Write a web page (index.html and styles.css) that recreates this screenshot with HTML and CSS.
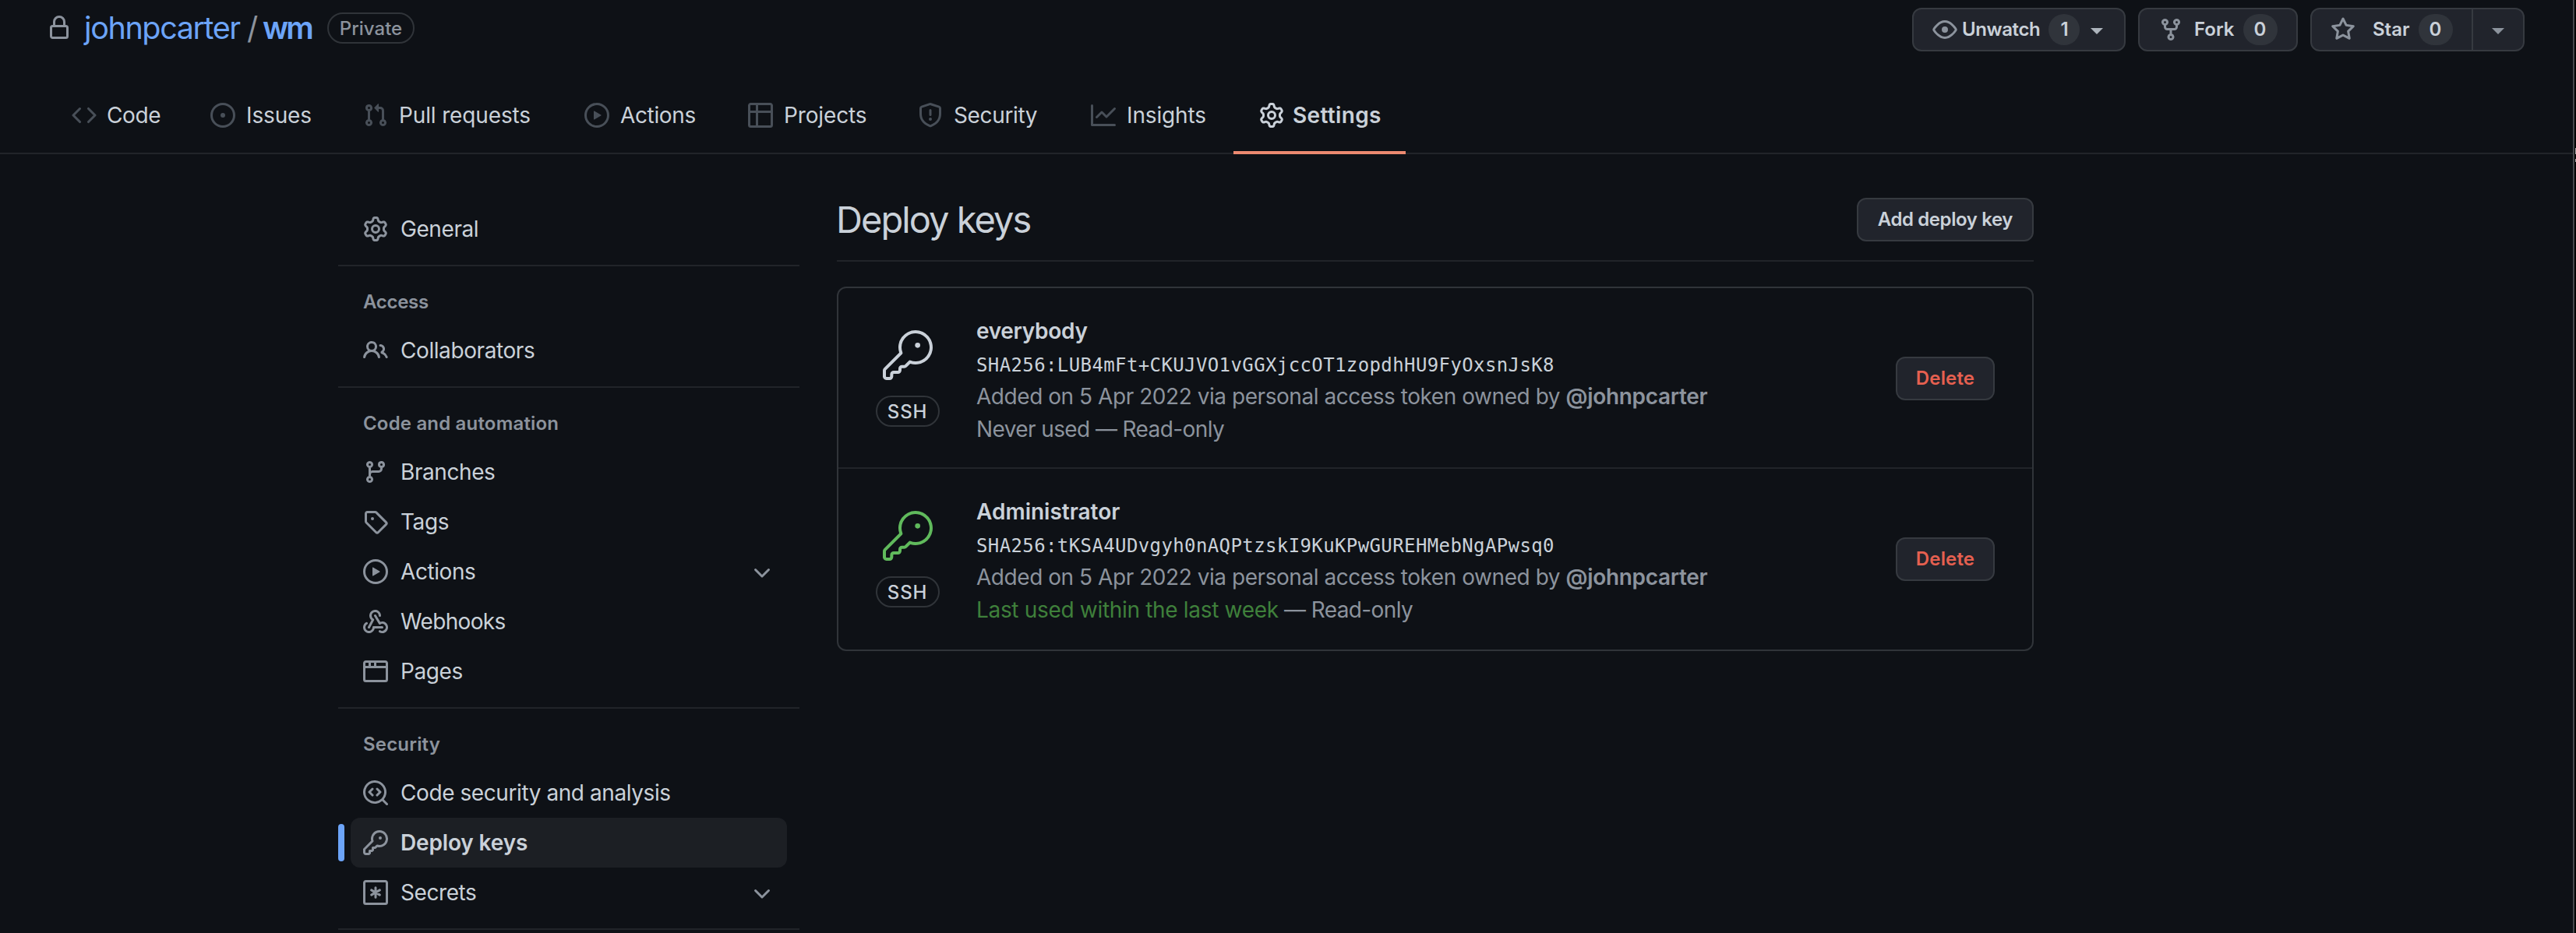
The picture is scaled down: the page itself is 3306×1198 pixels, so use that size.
FILE: index.html
```html
<!DOCTYPE html>
<html lang="en">
<head>
<meta charset="utf-8">
<title>Deploy keys · johnpcarter/wm</title>
<link rel="stylesheet" href="styles.css">
</head>
<body>
<svg class="sprite" aria-hidden="true">
<symbol id="lock" viewBox="0 0 16 16"><path fill-rule="evenodd" d="M4 4v2h-.25A1.75 1.75 0 002 7.75v5.5c0 .966.784 1.75 1.75 1.75h8.5A1.75 1.75 0 0014 13.25v-5.5A1.75 1.75 0 0012.25 6H12V4a4 4 0 10-8 0zm6.5 2V4a2.5 2.5 0 10-5 0v2h5zM12 7.5h.25a.25.25 0 01.25.25v5.5a.25.25 0 01-.25.25h-8.5a.25.25 0 01-.25-.25v-5.5a.25.25 0 01.25-.25H12z"/></symbol>
<symbol id="code" viewBox="0 0 16 16"><path fill-rule="evenodd" d="M4.72 3.22a.75.75 0 011.06 1.06L2.06 8l3.72 3.72a.75.75 0 11-1.06 1.06L.47 8.53a.75.75 0 010-1.06l4.25-4.25zm6.56 0a.75.75 0 10-1.06 1.06L13.94 8l-3.72 3.72a.75.75 0 101.06 1.06l4.25-4.25a.75.75 0 000-1.06l-4.25-4.25z"/></symbol>
<symbol id="issue" viewBox="0 0 16 16"><path d="M8 9.5a1.5 1.5 0 100-3 1.5 1.5 0 000 3z"/><path fill-rule="evenodd" d="M8 0a8 8 0 100 16A8 8 0 008 0zM1.5 8a6.5 6.5 0 1113 0 6.5 6.5 0 01-13 0z"/></symbol>
<symbol id="pr" viewBox="0 0 16 16"><path fill-rule="evenodd" d="M7.177 3.073L9.573.677A.25.25 0 0110 .854v4.792a.25.25 0 01-.427.177L7.177 3.427a.25.25 0 010-.354zM3.75 2.5a.75.75 0 100 1.5.75.75 0 000-1.5zm-2.25.75a2.25 2.25 0 113 2.122v5.256a2.251 2.251 0 11-1.5 0V5.372A2.25 2.25 0 011.5 3.25zM11 2.5h-1V4h1a1 1 0 011 1v5.628a2.251 2.251 0 101.5 0V5A2.5 2.5 0 0011 2.5zm1 10.25a.75.75 0 111.5 0 .75.75 0 01-1.5 0zM3.75 12a.75.75 0 100 1.5.75.75 0 000-1.5z"/></symbol>
<symbol id="play" viewBox="0 0 16 16"><path fill-rule="evenodd" d="M1.5 8a6.5 6.5 0 1113 0 6.5 6.5 0 01-13 0zM8 0a8 8 0 100 16A8 8 0 008 0zM6.379 5.227A.25.25 0 006 5.442v5.117a.25.25 0 00.379.214l4.264-2.559a.25.25 0 000-.428L6.379 5.227z"/></symbol>
<symbol id="table" viewBox="0 0 16 16"><path fill-rule="evenodd" d="M0 1.75C0 .784.784 0 1.75 0h12.5C15.216 0 16 .784 16 1.75v3.585a.746.746 0 010 .83v8.085A1.75 1.75 0 0114.25 16H6.309a.748.748 0 01-1.118 0H1.75A1.75 1.75 0 010 14.25V6.165a.746.746 0 010-.83V1.75zM1.5 6.5v7.75c0 .138.112.25.25.25H5v-8H1.5zM5 5H1.5V1.75a.25.25 0 01.25-.25H5V5zm1.5 1.5v8h7.75a.25.25 0 00.25-.25V6.5h-8zm8-1.5h-8V1.5h7.75a.25.25 0 01.25.25V5z"/></symbol>
<symbol id="shield" viewBox="0 0 16 16"><path fill-rule="evenodd" d="M7.467.133a1.75 1.75 0 011.066 0l5.25 1.68A1.75 1.75 0 0115 3.48V7c0 1.566-.32 3.182-1.303 4.682-.983 1.498-2.585 2.813-5.032 3.855a1.7 1.7 0 01-1.33 0c-2.447-1.042-4.049-2.357-5.032-3.855C1.32 10.182 1 8.566 1 7V3.48a1.75 1.75 0 011.217-1.667l5.25-1.68zm.61 1.429a.25.25 0 00-.153 0l-5.25 1.68a.25.25 0 00-.174.238V7c0 1.358.275 2.666 1.057 3.86.784 1.194 2.121 2.34 4.366 3.297a.2.2 0 00.154 0c2.245-.956 3.582-2.104 4.366-3.298C13.225 9.666 13.5 8.36 13.5 7V3.48a.25.25 0 00-.174-.237l-5.25-1.68zM9 10.5a1 1 0 11-2 0 1 1 0 012 0zm-.25-5.75a.75.75 0 10-1.5 0v3a.75.75 0 001.5 0v-3z"/></symbol>
<symbol id="graph" viewBox="0 0 16 16"><path fill-rule="evenodd" d="M1.5 1.75a.75.75 0 00-1.5 0v12.5c0 .414.336.75.75.75h14.5a.75.75 0 000-1.5H1.5V1.75zm14.28 2.53a.75.75 0 00-1.06-1.06L10 7.94 7.53 5.47a.75.75 0 00-1.06 0L3.22 8.72a.75.75 0 001.06 1.06L7 7.06l2.47 2.47a.75.75 0 001.06 0l5.25-5.25z"/></symbol>
<symbol id="gear" viewBox="0 0 16 16"><path fill-rule="evenodd" d="M7.429 1.525a6.593 6.593 0 011.142 0c.036.003.108.036.137.146l.289 1.105c.147.56.55.967.997 1.189.174.086.341.183.501.29.417.278.97.423 1.53.27l1.102-.303c.11-.03.175.016.195.046.219.31.41.641.573.989.014.031.022.11-.059.19l-.815.806c-.411.406-.562.957-.53 1.456a4.588 4.588 0 010 .582c-.032.499.119 1.05.53 1.456l.815.806c.08.08.073.159.059.19a6.494 6.494 0 01-.573.99c-.02.029-.086.074-.195.045l-1.103-.303c-.559-.153-1.112-.008-1.529.27-.16.107-.327.204-.5.29-.449.222-.851.628-.998 1.189l-.289 1.105c-.029.11-.101.143-.137.146a6.613 6.613 0 01-1.142 0c-.036-.003-.108-.037-.137-.146l-.289-1.105c-.147-.56-.55-.967-.997-1.189a4.502 4.502 0 01-.501-.29c-.417-.278-.97-.423-1.53-.27l-1.102.303c-.11.03-.175-.016-.195-.046a6.492 6.492 0 01-.573-.989c-.014-.031-.022-.11.059-.19l.815-.806c.411-.406.562-.957.53-1.456a4.587 4.587 0 010-.582c.032-.499-.119-1.05-.53-1.456l-.815-.806c-.08-.08-.073-.159-.059-.19a6.44 6.44 0 01.573-.99c.02-.029.086-.075.195-.045l1.103.303c.559.153 1.112.008 1.529-.27.16-.107.327-.204.5-.29.449-.222.851-.628.998-1.189l.289-1.105c.029-.11.101-.143.137-.146zM8 0c-.236 0-.47.01-.701.03-.743.065-1.29.615-1.458 1.261l-.29 1.106c-.017.066-.078.158-.211.224a5.994 5.994 0 00-.668.386c-.123.082-.233.09-.3.071L3.27 2.776c-.644-.177-1.392.02-1.82.63a7.977 7.977 0 00-.704 1.217c-.315.675-.111 1.422.363 1.891l.815.806c.05.048.098.147.088.294a6.084 6.084 0 000 .772c.01.147-.038.246-.088.294l-.815.806c-.474.469-.678 1.216-.363 1.891.2.428.436.835.704 1.218.428.609 1.176.806 1.82.63l1.103-.303c.066-.019.176-.011.299.071.213.143.436.272.668.386.133.066.194.158.212.224l.289 1.106c.169.646.715 1.196 1.458 1.26a8.094 8.094 0 001.402 0c.743-.064 1.29-.614 1.458-1.26l.29-1.106c.017-.066.078-.158.211-.224a5.98 5.98 0 00.668-.386c.123-.082.233-.09.3-.071l1.102.302c.644.177 1.392-.02 1.82-.63.268-.382.505-.789.704-1.217.315-.675.111-1.422-.364-1.891l-.814-.806c-.05-.048-.098-.147-.088-.294a6.1 6.1 0 000-.772c-.01-.147.039-.246.088-.294l.814-.806c.475-.469.679-1.216.364-1.891a7.992 7.992 0 00-.704-1.218c-.428-.609-1.176-.806-1.82-.63l-1.103.303c-.066.019-.176.011-.299-.071a5.991 5.991 0 00-.668-.386c-.133-.066-.194-.158-.212-.224L10.16 1.29C9.99.645 9.444.095 8.701.031A8.094 8.094 0 008 0zm1.5 8a1.5 1.5 0 11-3 0 1.5 1.5 0 013 0zM11 8a3 3 0 11-6 0 3 3 0 016 0z"/></symbol>
<symbol id="people" viewBox="0 0 16 16"><path fill-rule="evenodd" d="M5.5 3.5a2 2 0 100 4 2 2 0 000-4zM2 5.5a3.5 3.5 0 115.898 2.549 5.507 5.507 0 013.034 4.084.75.75 0 11-1.482.235 4.001 4.001 0 00-7.9 0 .75.75 0 01-1.482-.236A5.507 5.507 0 013.102 8.05 3.49 3.49 0 012 5.5zM11 4a.75.75 0 100 1.5 1.5 1.5 0 01.666 2.844.75.75 0 00-.416.672v.352a.75.75 0 00.574.73c1.2.289 2.162 1.2 2.522 2.372a.75.75 0 101.434-.44 5.01 5.01 0 00-2.56-3.012A3 3 0 0011 4z"/></symbol>
<symbol id="branch" viewBox="0 0 16 16"><path fill-rule="evenodd" d="M11.75 2.5a.75.75 0 100 1.5.75.75 0 000-1.5zm-2.25.75a2.25 2.25 0 113 2.122V6A2.5 2.5 0 0110 8.5H6a1 1 0 00-1 1v1.128a2.251 2.251 0 11-1.5 0V5.372a2.25 2.25 0 111.5 0v1.836A2.492 2.492 0 016 7h4a1 1 0 001-1v-.628A2.25 2.25 0 019.5 3.25zM4.25 12a.75.75 0 100 1.5.75.75 0 000-1.5zM3.5 3.25a.75.75 0 111.5 0 .75.75 0 01-1.5 0z"/></symbol>
<symbol id="tag" viewBox="0 0 16 16"><path fill-rule="evenodd" d="M2.5 7.775V2.75a.25.25 0 01.25-.25h5.025a.25.25 0 01.177.073l6.25 6.25a.25.25 0 010 .354l-5.025 5.025a.25.25 0 01-.354 0l-6.25-6.25a.25.25 0 01-.073-.177zm-1.5 0V2.75C1 1.784 1.784 1 2.75 1h5.025c.464 0 .91.184 1.238.513l6.25 6.25a1.75 1.75 0 010 2.474l-5.026 5.026a1.75 1.75 0 01-2.474 0l-6.25-6.25A1.75 1.75 0 011 7.775zM6 5a1 1 0 100 2 1 1 0 000-2z"/></symbol>
<symbol id="webhook" viewBox="0 0 16 16"><path d="M5.5 4.25a2.25 2.25 0 014.5 0 .75.75 0 001.5 0 3.75 3.75 0 10-6.14 2.889l-2.272 4.258a.75.75 0 001.324.706L7 7.25a.75.75 0 00-.309-1.015A2.25 2.25 0 015.5 4.25z"/><path d="M7.364 3.607a.75.75 0 011.03.257l2.608 4.349a3.75 3.75 0 11-.628 6.785.75.75 0 01.752-1.299 2.25 2.25 0 10-.033-3.88.75.75 0 01-1.03-.256L7.107 4.636a.75.75 0 01.257-1.03z"/><path d="M2.9 8.776A.75.75 0 012.625 9.8 2.25 2.25 0 106 11.75a.75.75 0 01.75-.751h5.5a.75.75 0 010 1.5H7.425a3.751 3.751 0 11-5.55-3.998.75.75 0 011.024.274z"/></symbol>
<symbol id="browser" viewBox="0 0 16 16"><path fill-rule="evenodd" d="M0 2.75C0 1.784.784 1 1.75 1h12.5c.966 0 1.75.784 1.75 1.75v10.5A1.75 1.75 0 0114.25 15H1.75A1.75 1.75 0 010 13.25V2.75zm1.75-.25a.25.25 0 00-.25.25V4.5h2v-2H1.75zM5 2.5v2h2v-2H5zm3.5 0v2h6V2.75a.25.25 0 00-.25-.25H8.5zm6 3.5h-13v7.25c0 .138.112.25.25.25h12.5a.25.25 0 00.25-.25V6z"/></symbol>
<symbol id="codescan" viewBox="0 0 16 16"><path d="M8.47 4.97a.75.75 0 000 1.06L9.94 7.5 8.47 8.97a.75.75 0 101.06 1.06l2-2a.75.75 0 000-1.06l-2-2a.75.75 0 00-1.06 0zM6.53 6.03a.75.75 0 00-1.06-1.06l-2 2a.75.75 0 000 1.06l2 2a.75.75 0 101.06-1.06L5.06 7.5l1.47-1.47z"/><path fill-rule="evenodd" d="M12.246 13.307a7.5 7.5 0 111.06-1.06l2.474 2.473a.75.75 0 11-1.06 1.06l-2.474-2.473zM1.5 7.5a6 6 0 1110.386 4.094.75.75 0 00-.292.293A6 6 0 011.5 7.5z"/></symbol>
<symbol id="key" viewBox="0 0 16 16"><path fill-rule="evenodd" d="M6.5 5.5a4 4 0 112.731 3.795.75.75 0 00-.768.18L7.44 10.5H6.25a.75.75 0 00-.75.75v1.19l-.06.06H4.25a.75.75 0 00-.75.75v1.19l-.06.06H1.75a.25.25 0 01-.25-.25v-1.69l5.024-5.023a.75.75 0 00.181-.768A3.995 3.995 0 016.5 5.5zm4-5.5a5.5 5.5 0 00-5.348 6.788L.22 11.72a.75.75 0 00-.22.53v2C0 15.216.784 16 1.75 16h2a.75.75 0 00.53-.22l.5-.5a.75.75 0 00.22-.53V14h.75a.75.75 0 00.53-.22l.5-.5a.75.75 0 00.22-.53V12h.75a.75.75 0 00.53-.22l.932-.932A5.5 5.5 0 1010.5 0zm.5 6a1 1 0 100-2 1 1 0 000 2z"/></symbol>
<symbol id="key-large" viewBox="0 0 24 24"><path d="M16.75 8.5a1.25 1.25 0 100-2.5 1.25 1.25 0 000 2.5z"/><path fill-rule="evenodd" d="M15.75 0a8.25 8.25 0 00-7.851 10.79L.513 18.178A1.75 1.75 0 000 19.414v2.836C0 23.217.784 24 1.75 24h1.5A1.75 1.75 0 005 22.25v-1a.25.25 0 01.25-.25h2A1.75 1.75 0 009 19.25V18.5a.25.25 0 01.25-.25h1.086c.464 0 .91-.184 1.237-.513l1.636-1.636A8.25 8.25 0 1015.75 0zM9 8.25a6.75 6.75 0 114.288 6.287.75.75 0 00-.804.168l-1.971 1.972a.25.25 0 01-.177.073H9.25A1.75 1.75 0 007.5 18.5v.75a.25.25 0 01-.25.25h-2a1.75 1.75 0 00-1.75 1.75v1a.25.25 0 01-.25.25h-1.5a.25.25 0 01-.25-.25v-2.836a.25.25 0 01.073-.177l7.722-7.721a.75.75 0 00.168-.804A6.73 6.73 0 019 8.25z"/></symbol>
<symbol id="secret" viewBox="0 0 16 16"><path fill-rule="evenodd" d="M1.75 0h12.5C15.216 0 16 .784 16 1.75v12.5A1.75 1.75 0 0114.25 16H1.75A1.75 1.75 0 010 14.25V1.75C0 .784.784 0 1.75 0zm0 1.5a.25.25 0 00-.25.25v12.5c0 .138.112.25.25.25h12.5a.25.25 0 00.25-.25V1.75a.25.25 0 00-.25-.25H1.75z"/><path d="M8 4.9v6.2M5.3 6.45l5.4 3.1M5.3 9.55l5.4-3.1" fill="none" stroke="currentColor" stroke-width="1.5" stroke-linecap="round"/></symbol>
<symbol id="eye" viewBox="0 0 16 16"><path fill-rule="evenodd" d="M1.679 7.932c.412-.621 1.242-1.75 2.366-2.717C5.175 4.242 6.527 3.5 8 3.5c1.473 0 2.824.742 3.955 1.715 1.124.967 1.954 2.096 2.366 2.717a.119.119 0 010 .136c-.412.621-1.242 1.75-2.366 2.717C10.825 11.758 9.473 12.5 8 12.5c-1.473 0-2.824-.742-3.955-1.715C2.92 9.818 2.09 8.69 1.679 8.068a.119.119 0 010-.136zM8 2c-1.981 0-3.67.992-4.933 2.078C1.797 5.169.88 6.423.43 7.1a1.619 1.619 0 000 1.798c.45.678 1.367 1.932 2.637 3.024C4.329 13.008 6.019 14 8 14c1.981 0 3.67-.992 4.933-2.078 1.27-1.091 2.187-2.345 2.637-3.023a1.619 1.619 0 000-1.798c-.45-.678-1.367-1.932-2.637-3.023C11.671 2.992 9.981 2 8 2zm0 8a2 2 0 100-4 2 2 0 000 4z"/></symbol>
<symbol id="fork" viewBox="0 0 16 16"><path fill-rule="evenodd" d="M5 3.25a.75.75 0 11-1.5 0 .75.75 0 011.5 0zm0 2.122a2.25 2.25 0 10-1.5 0v.878A2.25 2.25 0 005.75 8.5h1.5v2.128a2.251 2.251 0 101.5 0V8.5h1.5a2.25 2.25 0 002.25-2.25v-.878a2.25 2.25 0 10-1.5 0v.878a.75.75 0 01-.75.75h-4.5A.75.75 0 015 6.25v-.878zm3.75 7.378a.75.75 0 11-1.5 0 .75.75 0 011.5 0zm3-8.75a.75.75 0 100-1.5.75.75 0 000 1.5z"/></symbol>
<symbol id="star" viewBox="0 0 16 16"><path fill-rule="evenodd" d="M8 .25a.75.75 0 01.673.418l1.882 3.815 4.21.612a.75.75 0 01.416 1.279l-3.046 2.97.719 4.192a.75.75 0 01-1.088.791L8 12.347l-3.766 1.98a.75.75 0 01-1.088-.79l.72-4.194L.818 6.374a.75.75 0 01.416-1.28l4.21-.611L7.327.668A.75.75 0 018 .25zm0 2.445L6.615 5.5a.75.75 0 01-.564.41l-3.097.45 2.24 2.184a.75.75 0 01.216.664l-.528 3.084 2.769-1.456a.75.75 0 01.698 0l2.77 1.456-.53-3.084a.75.75 0 01.216-.664l2.24-2.183-3.096-.45a.75.75 0 01-.564-.41L8 2.694v.001z"/></symbol>
<symbol id="chevron" viewBox="0 0 16 16"><path fill-rule="evenodd" d="M12.78 6.22a.75.75 0 010 1.06l-4.25 4.25a.75.75 0 01-1.06 0L3.22 7.28a.75.75 0 011.06-1.06L8 9.94l3.72-3.72a.75.75 0 011.06 0z"/></symbol>
</svg>

<div class="page">
  <header class="repo-head">
    <svg class="icon"><use href="#lock"/></svg>
    <h1 class="repo-title"><a class="owner">johnpcarter</a><span class="slash">/</span><a class="repo">wm</a></h1>
    <span class="pill private">Private</span>
    <div class="repo-actions">
      <div class="btn watch"><svg class="icon"><use href="#eye"/></svg><span>Unwatch</span><span class="counter one">1</span><i class="caret"></i></div>
      <div class="btn forks"><svg class="icon"><use href="#fork"/></svg><span>Fork</span><span class="counter">0</span></div>
      <div class="btn stars"><div class="star-main"><svg class="icon"><use href="#star"/></svg><span>Star</span><span class="counter">0</span></div><div class="star-menu"><i class="caret"></i></div></div>
    </div>
  </header>

  <nav class="tabs">
    <a class="tab"><svg class="icon"><use href="#code"/></svg><span class="tight">Code</span></a>
    <a class="tab"><svg class="icon"><use href="#issue"/></svg><span>Issues</span></a>
    <a class="tab"><svg class="icon"><use href="#pr"/></svg><span>Pull requests</span></a>
    <a class="tab"><svg class="icon"><use href="#play"/></svg><span class="tight">Actions</span></a>
    <a class="tab"><svg class="icon"><use href="#table"/></svg><span>Projects</span></a>
    <a class="tab"><svg class="icon"><use href="#shield"/></svg><span class="tight">Security</span></a>
    <a class="tab"><svg class="icon"><use href="#graph"/></svg><span>Insights</span></a>
    <a class="tab selected"><svg class="icon"><use href="#gear"/></svg><span>Settings</span></a>
  </nav>

  <div class="settings">
    <aside class="sidebar">
      <ul class="group">
        <li class="item"><svg class="icon"><use href="#gear"/></svg><span>General</span></li>
      </ul>
      <h3 class="group-title tighter">Access</h3>
      <ul class="group">
        <li class="item"><svg class="icon"><use href="#people"/></svg><span>Collaborators</span></li>
      </ul>
      <h3 class="group-title">Code and automation</h3>
      <ul class="group">
        <li class="item"><svg class="icon"><use href="#branch"/></svg><span>Branches</span></li>
        <li class="item"><svg class="icon"><use href="#tag"/></svg><span>Tags</span></li>
        <li class="item"><svg class="icon"><use href="#play"/></svg><span>Actions</span><svg class="icon chevron"><use href="#chevron"/></svg></li>
        <li class="item"><svg class="icon"><use href="#webhook"/></svg><span class="webhooks">Webhooks</span></li>
        <li class="item"><svg class="icon"><use href="#browser"/></svg><span>Pages</span></li>
      </ul>
      <h3 class="group-title">Security</h3>
      <ul class="group">
        <li class="item"><svg class="icon"><use href="#codescan"/></svg><span>Code security and analysis</span></li>
        <li class="item active"><svg class="icon"><use href="#key"/></svg><span>Deploy keys</span></li>
        <li class="item"><svg class="icon"><use href="#secret"/></svg><span>Secrets</span><svg class="icon chevron"><use href="#chevron"/></svg></li>
      </ul>
      <div class="rule"></div>
    </aside>

    <main class="content">
      <div class="subhead">
        <h2 class="subhead-title">Deploy keys</h2>
        <div class="btn add">Add deploy key</div>
      </div>
      <ul class="keys">
        <li class="key-row">
          <div class="key-kind"><svg class="key-icon"><use href="#key-large"/></svg><span class="pill ssh">SSH</span></div>
          <div class="key-info">
            <strong class="key-name">everybody</strong>
            <code class="fingerprint">SHA256:LUB4mFt+CKUJVO1vGGXjccOT1zopdhHU9FyOxsnJsK8</code>
            <span class="meta">Added on 5 Apr 2022 via personal access token owned by <b>@johnpcarter</b></span>
            <span class="meta usage">Never used — Read-only</span>
          </div>
          <div class="btn delete">Delete</div>
        </li>
        <li class="key-row">
          <div class="key-kind used"><svg class="key-icon"><use href="#key-large"/></svg><span class="pill ssh">SSH</span></div>
          <div class="key-info">
            <strong class="key-name admin">Administrator</strong>
            <code class="fingerprint">SHA256:tKSA4UDvgyh0nAQPtzskI9KuKPwGUREHMebNgAPwsq0</code>
            <span class="meta">Added on 5 Apr 2022 via personal access token owned by <b>@johnpcarter</b></span>
            <span class="meta usage"><span class="recent">Last used within the last week</span> — Read-only</span>
          </div>
          <div class="btn delete">Delete</div>
        </li>
      </ul>
    </main>
  </div>
</div>
<div class="edge"><i class="mark mark-a"></i><i class="mark mark-b"></i></div>
</body>
</html>
```
FILE: styles.css
```css
:root {
  --bg: #0e1116;
  --text: #cad1d9;
  --muted: #8c939d;
  --faint: #484f58;
  --line: #212429;
  --border: #303439;
  --btn: #21242c;
  --btn-border: #363a40;
  --blue: #6ca4f8;
}
* { box-sizing: border-box; }
html, body { margin: 0; height: 1198px; overflow: hidden; }
body {
  display: flex;
  background: #000;
  color: var(--text);
  font: 400 28px/42px Inter, sans-serif;
}
h1, h2, h3, ul { margin: 0; padding: 0; list-style: none; }
.sprite { position: absolute; width: 0; height: 0; }
.icon { width: 32px; height: 32px; flex: none; fill: currentColor; display: block; color: var(--muted); }
.page { width: 3302px; height: 1198px; background: var(--bg); overflow: hidden; }

/* Window edge */
.edge { width: 4px; border-left: 2px solid #45474b; padding: 190px 0 0 1px; }
.mark { display: block; width: 1px; background: #a9a9a9; }
.mark-a { height: 8px; }
.mark-b { height: 4px; margin-top: 6px; }

/* Repository header */
.repo-head { display: flex; height: 100px; padding: 10px 62px 0 60px; align-items: flex-start; }
.repo-head > .icon { margin-top: 10px; }
.repo-title { display: flex; width: 312px; margin: 2px 0 0 16px; font: 400 39.5px/48px Inter, sans-serif; color: var(--blue); }
.owner { width: 209px; letter-spacing: -1.4px; }
.slash { width: 20px; color: var(--muted); }
.repo { font-weight: 600; letter-spacing: -3px; }
.pill {
  height: 40px;
  border: 2px solid var(--border);
  border-radius: 20px;
  font-size: 24px;
  font-weight: 500;
  line-height: 37px;
  text-align: center;
}
.private { margin-top: 6px; width: 112px; color: var(--muted); }
.repo-actions { display: flex; gap: 16px; margin-left: auto; }

.btn {
  display: flex;
  align-items: center;
  height: 56px;
  border: 2px solid var(--btn-border);
  border-radius: 12px;
  background: var(--btn);
  font-size: 24px;
  font-weight: 600;
  line-height: 36px;
}
.watch { width: 274px; padding-left: 24px; letter-spacing: -.4px; }
.watch .icon { margin-right: 6px; }
.counter {
  width: 44px;
  height: 40px;
  margin-left: 11px;
  border-radius: 20px;
  background: #30343b;
  line-height: 40px;
  text-align: center;
}
.counter.one { width: 40px; }
.caret { display: block; border: 8px solid transparent; border-top-color: #adb4bc; border-bottom: 0; margin: 4px 0 0 14px; }
.forks { width: 205px; padding-left: 24px; }
.forks .icon { margin-right: 14px; }
.stars { width: 275px; }
.star-main { display: flex; align-items: center; width: 207px; height: 52px; padding-left: 24px; border-right: 2px solid var(--btn-border); }
.star-main .icon { margin-right: 22px; }
.star-menu .caret { margin-left: 24px; border-top-color: var(--muted); }

/* Tabs */
.tabs {
  display: grid;
  grid-template-columns: 178px 196px 284px 210px 218px 222px 215px 221px;
  height: 98px;
  padding-left: 60px;
  border-bottom: 2px solid var(--line);
}
.tab { display: flex; align-items: center; height: 98px; gap: 14px; padding: 2px 0 0 32px; border-bottom: 4px solid transparent; letter-spacing: -.14px; }
.tab .icon { color: var(--faint); }
.tight { letter-spacing: -.35px; }
.tab:first-child { gap: 13px; }
.tab.selected { border-color: #ec8a70; font-weight: 600; letter-spacing: .35px; gap: 11px; }
.tab.selected .icon { color: var(--text); margin-left: 1px; }

/* Sidebar */
.settings { display: flex; gap: 48px; padding: 54px 0 0 434px; }
.sidebar { width: 592px; padding-top: 10px; }
.group { padding: 0 16px 14px; }
.group-title {
  height: 78px;
  padding: 28px 0 0 32px;
  border-top: 2px solid var(--line);
  font-size: 24px;
  font-weight: 600;
  line-height: 36px;
  letter-spacing: .18px;
  color: var(--muted);
}
.tighter { letter-spacing: -.3px; }
.rule { height: 2px; background: var(--line); }
.item { display: flex; align-items: center; height: 64px; padding: 0 16px; gap: 16px; border-radius: 12px; letter-spacing: -.42px; }
.webhooks { letter-spacing: -.65px; }
.chevron { margin-left: auto; }
.item.active { position: relative; background: #1c1f24; font-weight: 600; letter-spacing: -.15px; }
.item.active::before { content: ""; position: absolute; left: -16px; top: 8px; width: 8px; height: 48px; border-radius: 6px; background: var(--blue); }

/* Content */
.content { width: 1536px; }
.subhead { display: flex; align-items: flex-start; justify-content: space-between; height: 84px; padding-top: 2px; border-bottom: 2px solid var(--line); }
.subhead-title { margin-left: -1px; font: 400 47px/56px Inter, sans-serif; letter-spacing: -1.95px; }
.add { padding: 0 25px; letter-spacing: -.4px; }
.keys { margin-top: 32px; border: 2px solid var(--border); border-radius: 12px; }
.key-row { display: flex; align-items: center; height: 230px; padding: 2px 48px 0 0; }
.key-row + .key-row { height: 234px; padding-top: 0; border-top: 2px solid var(--line); }
.key-kind { display: flex; flex-direction: column; align-items: center; width: 177px; gap: 20px; }
.key-icon { width: 64px; height: 64px; fill: currentColor; }
.used .key-icon { color: #60ba5c; }
.ssh { width: 82px; letter-spacing: .8px; }
.key-info { display: flex; flex-direction: column; flex: 1; padding-top: 3px; }
.key-name { font-weight: 600; letter-spacing: -.3px; }
.admin { letter-spacing: 0; }
.fingerprint { height: 42px; padding-top: 2px; font: 400 24px/42px "DejaVu Sans Mono", monospace; letter-spacing: .39px; }
.meta { color: var(--muted); letter-spacing: -.45px; }
.meta b { font-weight: 600; letter-spacing: -.32px; }
.usage { letter-spacing: -.6px; }
.recent { color: #3f803b; letter-spacing: -.32px; }
.delete { width: 127px; justify-content: center; color: #e56050; letter-spacing: .15px; }
```
